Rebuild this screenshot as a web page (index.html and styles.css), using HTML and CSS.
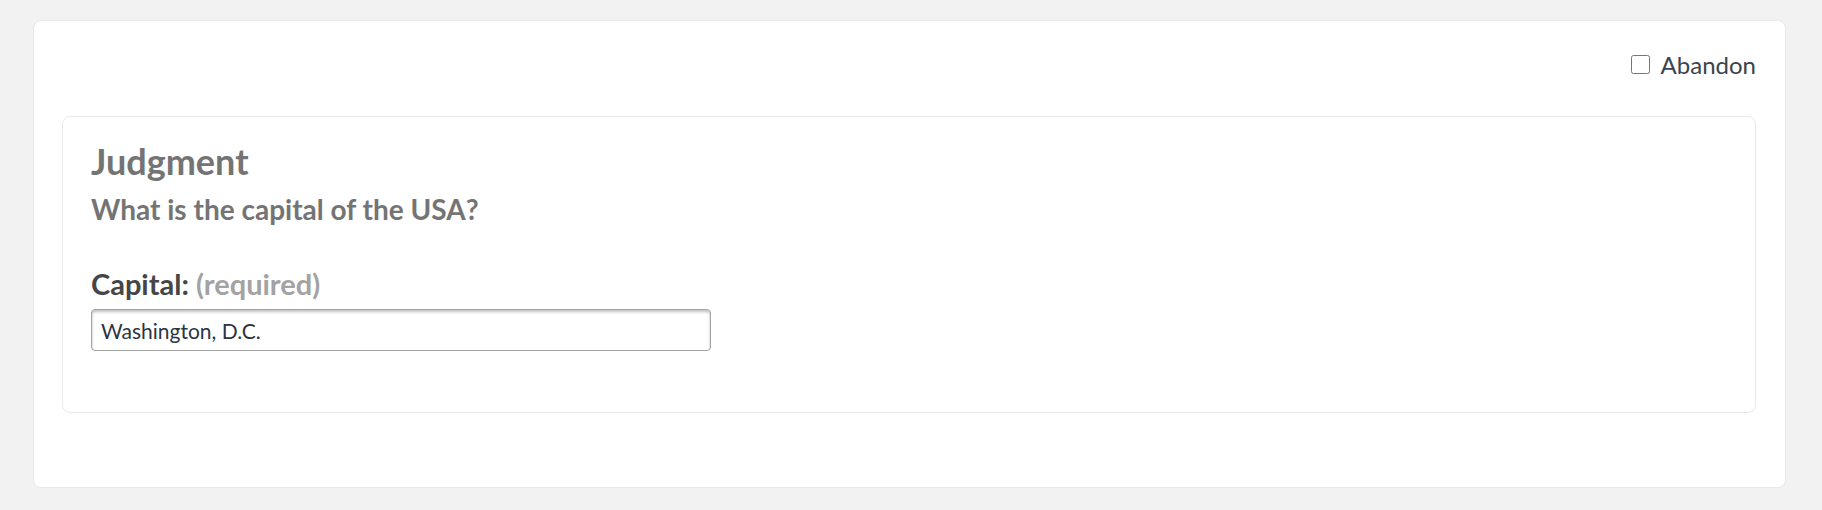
FILE: index.html
```html
<!DOCTYPE html>
<html lang="en">
<head>
  <meta charset="UTF-8" />
  <title>Judgment</title>
  <link rel="stylesheet" href="styles.css">
</head>
<body>
  <div class="panel">
    <div class="panel-top">
      <label class="abandon">
        <input type="checkbox" class="abandon-box">
        <span>Abandon</span>
      </label>
    </div>

    <div class="question">
      <h2 class="question-title">Judgment</h2>
      <h3 class="question-text">What is the capital of the USA?</h3>

      <div class="field">
        <label class="field-label" for="capital">Capital: <span class="field-req">(required)</span></label>
        <input type="text" id="capital" class="field-input" value="Washington, D.C.">
      </div>
    </div>
  </div>
</body>
</html>
```

FILE: styles.css
```css
* {
  margin: 0;
  padding: 0;
  box-sizing: border-box;
}

body {
  background: #f2f2f2;
  font-family: Lato, "Open Sans", sans-serif;
  padding: 20px 36px 22px 33px;
  height: 510px;
  overflow: hidden;
}

.panel {
  background: #fff;
  border: 1px solid #e8e8e8;
  border-radius: 8px;
  padding: 28px 29px 74px 28px;
}

.panel-top {
  display: flex;
  justify-content: flex-end;
  height: 30px;
  margin-bottom: 37px;
}

.abandon {
  display: flex;
  align-items: center;
  gap: 11px;
  font-size: 24px;
  color: #3b4350;
}

.abandon-box {
  width: 19px;
  height: 19px;
  margin: 0;
}

.question {
  border: 1px solid #e9e9e9;
  border-radius: 8px;
  padding: 22px 28px 0 28px;
  height: 297px;
}

.question-title {
  font-size: 36px;
  font-weight: 700;
  color: #747474;
  line-height: 44px;
}

.question-text {
  margin-top: 6px;
  font-size: 28px;
  font-weight: 700;
  color: #747474;
  line-height: 40px;
}

.field {
  margin-top: 37px;
}

.field-label {
  display: block;
  font-size: 29px;
  font-weight: 700;
  color: #464646;
  line-height: 36px;
  margin-bottom: 7px;
}

.field-req {
  color: #a3a3a3;
}

.field-input {
  display: block;
  width: 620px;
  height: 42px;
  border: 1px solid #a4a4a4;
  border-radius: 4px;
  box-shadow: inset 0 2px 3px rgba(0, 0, 0, 0.25);
  padding: 0 9px;
  font-family: Lato, sans-serif;
  font-size: 21px;
  color: #2c3440;
  outline: none;
}
```
